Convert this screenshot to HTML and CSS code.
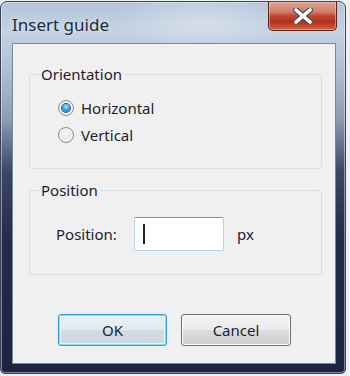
FILE: index.html
```html
<!DOCTYPE html>
<html>
<head>
    <title>Insert guide</title>
    <link rel="stylesheet" href="styles.css">
</head>
<body>
    <div class="window">
        <div class="titlebar">
            <span class="title">Insert guide</span>
            <button class="close" title="Close">
                <svg width="24" height="16" viewBox="0 0 24 16">
                    <path d="M5 2 L19 14 M19 2 L5 14" stroke="#4a4f57" stroke-width="6" stroke-linecap="round"/>
                    <path d="M5 2 L19 14 M19 2 L5 14" stroke="#ffffff" stroke-width="3.6" stroke-linecap="round"/>
                </svg>
            </button>
        </div>
        <div class="client">
            <fieldset class="group">
                <legend>Orientation</legend>
                <div class="options">
                    <label class="radio"><span class="dot checked"></span>Horizontal</label>
                    <label class="radio"><span class="dot"></span>Vertical</label>
                </div>
            </fieldset>

            <fieldset class="group">
                <legend>Position</legend>
                <div class="field">
                    <span class="field-label">Position:</span>
                    <span class="textbox"><span class="caret"></span></span>
                    <span class="unit">px</span>
                </div>
            </fieldset>

            <div class="buttons">
                <button class="btn default">OK</button>
                <button class="btn">Cancel</button>
            </div>
        </div>
    </div>
</body>
</html>
```

FILE: styles.css
```css
body {
    margin: 0;
    background: #eef1f4;
    font-family: "Noto Sans", "DejaVu Sans", sans-serif;
    font-size: 15px;
    color: #1c1c34;
}
.window {
    width: 346px;
    height: 373px;
    margin-top: 1px;
    box-sizing: border-box;
    padding: 0 9px 0 11px;
    border: 1px solid #3a4256;
    border-radius: 7px 7px 5px 5px;
    background: linear-gradient(to bottom, #b4c5d9 0, #c3d1e1 30px, #aebed2 70px, #8b9ab1 118px, #3a4662 170px, #222b48 240px, #1c2442 100%);
    box-shadow: inset 0 0 0 1px rgba(255,255,255,0.45);
}
.titlebar {
    height: 41px;
    display: flex;
    justify-content: space-between;
    align-items: flex-start;
    background: radial-gradient(ellipse 90px 30px at 190px 20px, rgba(255,255,255,0.35), rgba(255,255,255,0));
}
.title {
    margin-top: 11px;
    font-size: 17px;
    color: #1d2b3c;
    text-shadow: 0 0 6px rgba(255,255,255,0.8);
}
.close {
    width: 69px;
    height: 29px;
    margin-right: -1px;
    padding: 0;
    border: 1px solid #5b2218;
    border-top: none;
    border-radius: 0 0 5px 5px;
    background: linear-gradient(to bottom, #e0a597 0, #d27c6b 35%, #c2452f 50%, #b0301e 70%, #d2623f 100%);
    box-shadow: inset 0 0 0 1px rgba(255,220,210,0.45);
    display: flex;
    align-items: center;
    justify-content: center;
}
.client {
    height: 321px;
    box-sizing: border-box;
    background: #f0f0f0;
    border: 1px solid #7b879b;
    display: flex;
    flex-direction: column;
}
.group {
    margin: 20px 13px 0 16px;
    padding: 0;
    border: 1px solid #d5dfe5;
    border-radius: 3px;
}
.group + .group {
    margin-top: 11px;
}
.group legend {
    margin-left: 9px;
    padding: 0 2px;
    line-height: 20px;
}
.options {
    padding: 10px 0 20px 28px;
}
.radio {
    height: 27px;
    display: flex;
    align-items: center;
    gap: 7px;
}
.dot {
    width: 14px;
    height: 14px;
    border: 1px solid #8a8c8e;
    border-radius: 50%;
    background: radial-gradient(circle at 50% 40%, #f8f8f8, #d4d4d4);
    box-shadow: inset 0 0 0 2px #f4f4f4;
    display: flex;
    align-items: center;
    justify-content: center;
}
.dot.checked::after {
    content: "";
    width: 8px;
    height: 8px;
    border-radius: 50%;
    background: radial-gradient(circle at 50% 35%, #b6e6fb 0, #3ba3e0 45%, #1467a6 100%);
    box-shadow: 0 0 0 1px #29609a;
}
.field {
    padding: 17px 0 23px 26px;
    display: flex;
    align-items: center;
}
.field-label {
    width: 78px;
}
.textbox {
    width: 90px;
    height: 34px;
    box-sizing: border-box;
    background: #fff;
    border: 1px solid #b6d3ec;
    border-top-color: #5c98cf;
    border-radius: 2px;
    display: flex;
    align-items: center;
    padding-left: 8px;
}
.caret {
    width: 2px;
    height: 20px;
    background: #222;
}
.unit {
    margin-left: 13px;
}
.buttons {
    margin: auto 0 17px 45px;
    display: flex;
    gap: 14px;
}
.btn {
    width: 110px;
    height: 32px;
    font-family: inherit;
    font-size: 15px;
    color: #1c1c34;
    border: 1px solid #707070;
    border-radius: 3px;
    background: linear-gradient(to bottom, #f3f3f3 0, #ebebeb 50%, #dddddd 50%, #cfcfcf 100%);
    box-shadow: inset 0 0 0 1px #fbfbfb;
}
.btn.default {
    width: 109px;
    border-color: #2d9ad8;
    background: linear-gradient(to bottom, #eaf1f6 0, #e1e9ef 50%, #d3dde5 50%, #c9d5de 100%);
    box-shadow: inset 0 0 0 1px #8fdcf8, inset 0 0 0 2px #e8f6fc;
}
```
